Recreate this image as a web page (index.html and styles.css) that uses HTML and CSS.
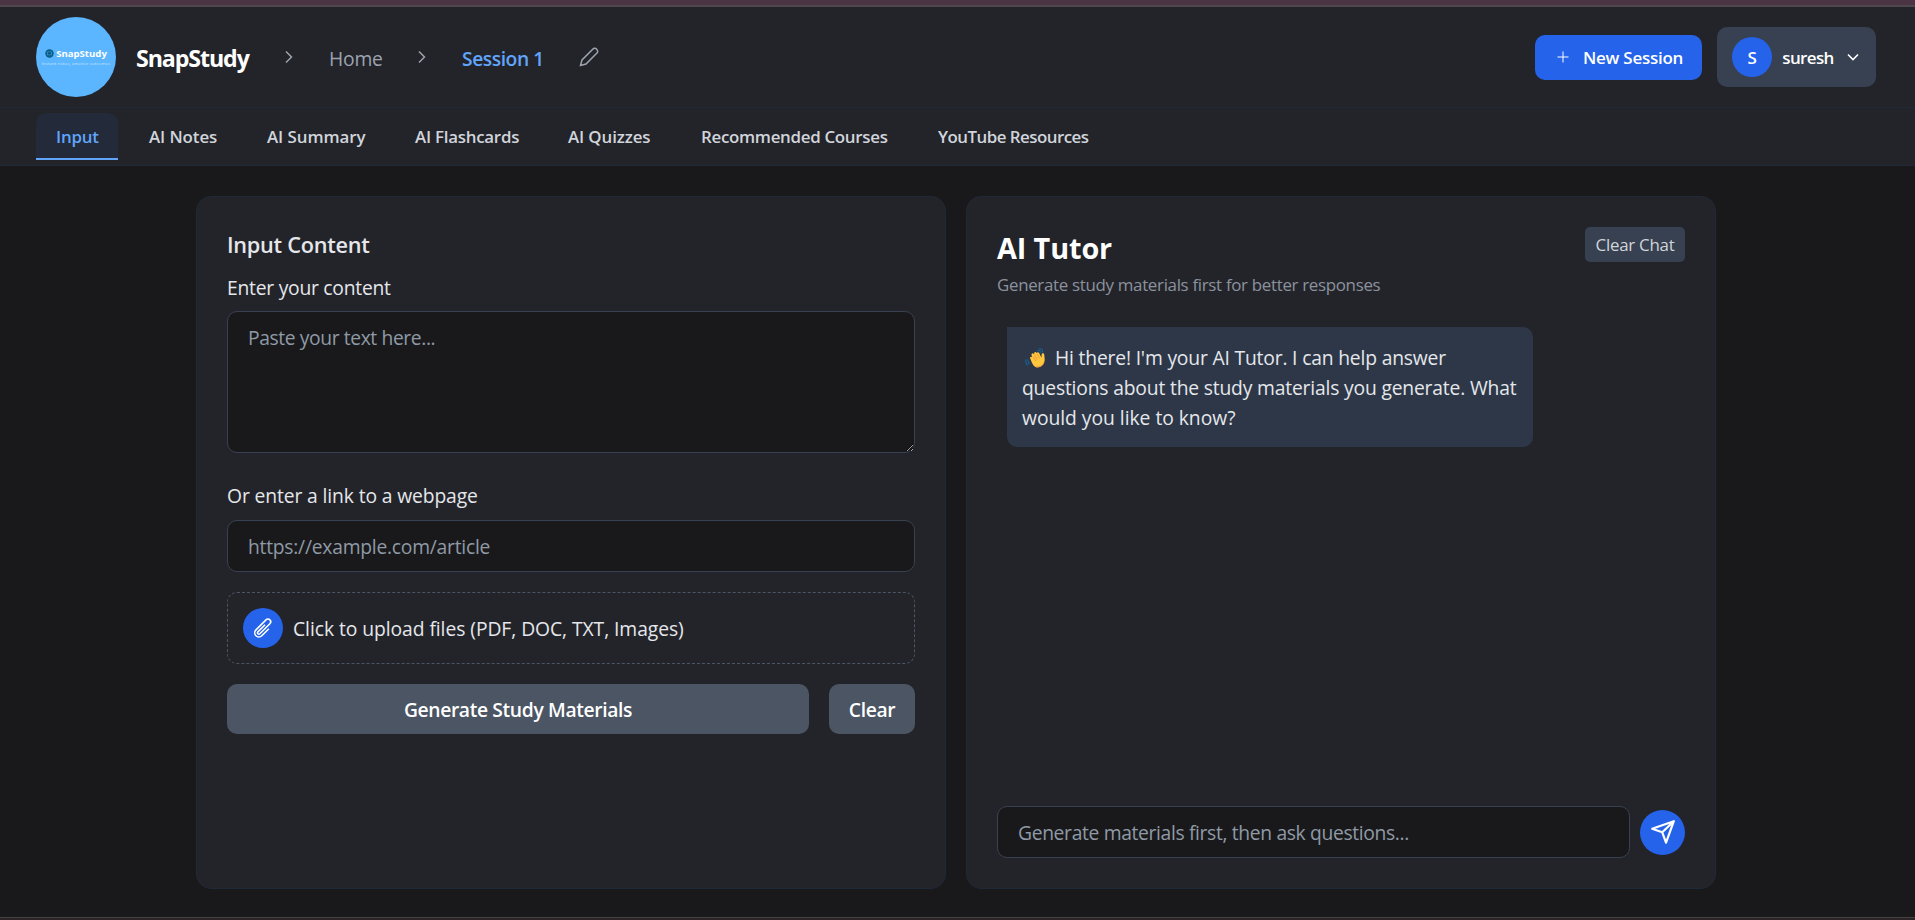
FILE: index.html
```html
<!DOCTYPE html>
<html lang="en">
<head>
<meta charset="utf-8">
<title>SnapStudy</title>
<link rel="stylesheet" href="styles.css">
</head>
<body>
<div class="window-strip"></div>
<header class="topbar">
  <div class="brand-logo">
    <div class="logo-row">
      <svg class="logo-mark" viewBox="0 0 10 10"><circle cx="5" cy="5" r="4.7" fill="#075e8a"/><path d="M2.800 3.200c1-.6 1.700-.5 2.200.2.500-.7 1.200-.8 2.200-.2v3.500c-1-.5-1.700-.4-2.200.2-.500-.6-1.200-.7-2.200-.2z" fill="none" stroke="#4da3cf" stroke-width=".7"/></svg>
      <span class="logo-name">SnapStudy</span>
    </div>
    <span class="logo-tag">Instant notes, smarter outcomes</span>
  </div>
  <span class="brand-name">SnapStudy</span>
  <svg class="crumb-arrow first" viewBox="0 0 20 20"><path d="M7 4.500 12.500 10 7 15.500"/></svg>
  <span class="crumb">Home</span>
  <svg class="crumb-arrow" viewBox="0 0 20 20"><path d="M7 4.500 12.500 10 7 15.500"/></svg>
  <span class="crumb current">Session 1</span>
  <svg class="pencil" viewBox="0 0 20 20"><path d="M1.500 18.500 3 13 13.700 2.300a2.500 2.500 0 0 1 4 0 2.500 2.500 0 0 1 0 4L7 17z"/></svg>
  <button class="new-session"><svg class="plus" viewBox="0 0 12 12"><path d="M6 .5v11M.5 6h11"/></svg><span class="btn-text">New Session</span></button>
  <button class="user"><span class="avatar">S</span><span class="btn-text user-name">suresh</span><svg class="caret" viewBox="0 0 12 8"><path d="M1 1.500 6 6.500 11 1.500"/></svg></button>
</header>
<nav class="tabs">
  <a class="tab active">Input</a>
  <a class="tab t-notes">AI Notes</a>
  <a class="tab t-summary">AI Summary</a>
  <a class="tab t-flash">AI Flashcards</a>
  <a class="tab t-quiz">AI Quizzes</a>
  <a class="tab t-rec">Recommended Courses</a>
  <a class="tab t-yt">YouTube Resources</a>
</nav>
<main class="workspace">
  <section class="card input-card">
    <h2 class="input-title">Input Content</h2>
    <label class="label l-content">Enter your content</label>
    <textarea class="field area" placeholder="Paste your text here..."></textarea>
    <label class="label l-link">Or enter a link to a webpage</label>
    <input class="field link" placeholder="https://example.com/article">
    <div class="dropzone">
      <span class="clip"><svg viewBox="0 0 24 24"><path d="m18.375 12.739-7.693 7.693a4.500 4.500 0 0 1-6.364-6.364l10.940-10.940A3 3 0 1 1 19.500 7.372L8.552 18.320m.009-.010-.010.010m5.699-9.941-7.810 7.810a1.500 1.500 0 0 0 2.112 2.130"/></svg></span>
      <span class="drop-text">Click to upload files (PDF, DOC, TXT, Images)</span>
    </div>
    <div class="actions"><button class="btn generate">Generate Study Materials</button><button class="btn clear">Clear</button></div>
  </section>
  <section class="card tutor-card">
    <div class="tutor-head">
      <div><h1 class="tutor-title">AI Tutor</h1><p class="tutor-sub">Generate study materials first for better responses</p></div>
      <button class="clear-chat">Clear Chat</button>
    </div>
    <div class="bubble">
      <div class="line line-1"><svg class="wave" viewBox="0 0 24 24"><path d="M14 3.500c2-1.500 4.500.2 4.200 2.500M15.500 1.200c2.500-1 5 .8 4.700 3.500M3.500 13c-.5 2 .5 4 2 5M1.200 13c-.7 2 0 5 2 7" fill="none" stroke="#17649a" stroke-width="1.200"/><path d="M6 12c-1-1.500 1-3 2-1.500L7.500 8c-.5-2 1.500-3 2.500-1.200l.5-.3c-.2-2 2-2.500 2.800-.8 1-1.500 2.500-1 3 .3l2.500 5 .2-3.500c.2-2 2.800-2 3 .2.300 3 1 6-.1 9-1.500 4-4.700 6.300-8.700 5.500-3.500-.7-5.500-5.500-7.200-10.200z" fill="#ffc83d"/><path d="m10.500 7.500 3.500 6m-.5-7 3 5.500m-7.500-2 3.500 5M13 21c4 1.200 7.500-.8 8.500-4.500" fill="none" stroke="#f08a3c" stroke-width=".9"/></svg><span>Hi there! I'm your AI Tutor. I can help answer</span></div>
      <div class="line line-2">questions about the study materials you generate. What</div>
      <div class="line line-3">would you like to know?</div>
    </div>
    <div class="composer">
      <input class="field ask" placeholder="Generate materials first, then ask questions...">
      <button class="send" aria-label="Send"><svg viewBox="0 0 24 24"><path d="M22 2 14.800 21.800 11.300 12.300 2 9zM22 2 11.300 12.300"/></svg></button>
    </div>
  </section>
</main>
<div class="window-edge"></div>
</body>
</html>
```
FILE: styles.css
```css
* { box-sizing: border-box; }
html { height: 920px; overflow: hidden; background: #19191b; }
body { margin: 0; height: 920px; overflow: hidden; display: flex; flex-direction: column; background: #19191b; color: #e5e7eb; font-family: "Open Sans", "Noto Sans", sans-serif; font-size: 19.300px; letter-spacing: -.25px; }
h1, h2, p { margin: 0; }
button { border: 0; padding: 0; color: #fff; font: inherit; font-weight: 600; letter-spacing: inherit; white-space: nowrap; }
svg { flex: none; fill: none; stroke: currentColor; }
.window-strip { height: 7px; flex: none; background: #4b3545; border-bottom: 2px solid #50474c; }
.topbar { height: 101px; flex: none; display: flex; align-items: center; padding: 0 39px 0 36px; background: #23242a; border-bottom: 1px solid #1f2937; white-space: nowrap; }
.brand-logo { width: 80px; height: 80px; flex: none; border-radius: 50%; background: #5cb6ff; display: flex; flex-direction: column; align-items: center; padding-top: 30px; letter-spacing: 0; }
.logo-row { display: flex; align-items: center; gap: 2px; height: 13px; }
.logo-mark { width: 9px; height: 9px; stroke: none; }
.logo-name { font: 700 9.600px/13px "Open Sans", sans-serif; color: #fff; }
.logo-tag { font: 4.300px/6px "Open Sans", sans-serif; color: #c3e3ff; letter-spacing: .1px; }
.brand-name { width: 114px; margin-left: 20px; padding-top: 1px; font-size: 23.200px; font-weight: 700; color: #fff; letter-spacing: -1.100px; }
.crumb-arrow { width: 20px; height: 20px; margin: 0 30px; color: #9ca3af; stroke-width: 1.500; }
.crumb-arrow.first { margin-left: 29px; }
.crumb { width: 53px; padding-top: 2px; color: #9ca3af; letter-spacing: -.2px; }
.crumb.current { width: 82px; color: #60a5fa; font-weight: 600; letter-spacing: -.45px; }
.pencil { width: 20px; height: 20px; margin-left: 35px; color: #9ca3af; stroke-width: 1.500; }
.new-session { width: 167px; height: 45px; margin-left: auto; padding-left: 22px; display: flex; align-items: center; gap: 14px; border-radius: 10px; background: #2563eb; font-size: 17px; letter-spacing: -.27px; }
.btn-text { padding-top: 1px; }
.plus { width: 12px; height: 12px; }
.user { width: 159px; height: 60px; margin-left: 15px; padding-left: 15px; display: flex; align-items: center; border-radius: 10px; background: #374151; font-size: 17px; }
.avatar { width: 40px; height: 40px; line-height: 42px; border-radius: 50%; background: #2563eb; }
.user-name { width: 52px; margin: 0 13px 0 10px; letter-spacing: -.65px; }
.caret { width: 12px; height: 8px; stroke-width: 1.600; }
.tabs { height: 58px; flex: none; display: flex; align-items: flex-start; gap: 10px; padding: 5px 36px 0; background: #23242a; border-bottom: 1px solid #1f2937; }
.tab { height: 47px; padding: 0 0 0 21px; line-height: 47px; color: #d1d5db; font-size: 16.900px; font-weight: 600; letter-spacing: -.25px; white-space: nowrap; }
.tab.active { width: 82px; padding-left: 20px; color: #60a5fa; background: #232a3a; border-bottom: 2px solid #60a5fa; border-radius: 10px 10px 0 0; }
.t-notes { width: 108px; letter-spacing: -.08px; }
.t-summary { width: 138px; letter-spacing: -.06px; }
.t-flash { width: 143px; }
.t-quiz { width: 123px; letter-spacing: -.12px; }
.t-rec { width: 227px; letter-spacing: -.3px; }
.t-yt { width: 192px; letter-spacing: -.52px; }
.workspace { display: flex; gap: 20px; padding: 30px 0 0 196px; height: 723px; flex: none; }
.card { width: 750px; height: 693px; padding: 30px; background: #23242a; border: 1px solid #1f2937; border-radius: 15px; display: flex; flex-direction: column; }
.input-title { height: 35px; line-height: 35px; font-size: 21.700px; font-weight: 600; letter-spacing: -.27px; }
.label { height: 30px; line-height: 29px; white-space: nowrap; }
.l-content { margin: 11px 0 8px; }
.l-link { margin: 28px 0 9px; letter-spacing: -.12px; }
.field { background: #19191b; border: 1px solid #374151; border-radius: 10px; padding: 0 20px; color: #e5e7eb; font: inherit; letter-spacing: -.25px; width: 100%; flex: none; }
.field::placeholder { color: #8f9aa6; opacity: 1; }
.area { height: 142px; padding-top: 12px; resize: vertical; display: block; letter-spacing: -.4px; }
.link { height: 52px; }
.dropzone { height: 72px; flex: none; margin: 20px 0; padding-left: 15px; border: 1px dashed #4b5563; border-radius: 10px; display: flex; align-items: center; gap: 10px; white-space: nowrap; letter-spacing: -.06px; }
.clip { width: 40px; height: 40px; padding: 0 1px 1px 0; border-radius: 50%; background: #2563eb; color: #fff; display: grid; place-items: center; }
.clip svg { width: 22px; height: 22px; stroke-width: 1.700; }
.actions { display: flex; gap: 20px; }
.btn { height: 50px; border-radius: 10px; background: #4b5563; letter-spacing: -.36px; }
.generate { flex: 1; }
.clear { width: 86px; }
.tutor-head { display: flex; justify-content: space-between; height: 100px; flex: none; }
.tutor-title { font-size: 28.800px; line-height: 42px; font-weight: 700; color: #fff; white-space: nowrap; letter-spacing: -.1px; }
.tutor-sub { font-size: 16.900px; line-height: 31px; color: #8b929e; white-space: nowrap; letter-spacing: -.31px; }
.clear-chat { width: 100px; height: 35px; border-radius: 5px; background: #374151; color: #d1d5db; font-size: 16.900px; font-weight: 400; }
.bubble { width: 526px; height: 120px; margin-left: 10px; padding: 15px; flex: none; background: #2d3748; border-radius: 0 10px 10px 10px; }
.line { height: 30px; line-height: 31px; white-space: nowrap; letter-spacing: -.18px; }
.line-1 { display: flex; }
.line-3 { letter-spacing: -.03px; }
.wave { width: 21px; height: 21px; margin: 6px 9px 0 3px; stroke: none; }
.composer { margin-top: auto; display: flex; align-items: center; gap: 10px; }
.ask { width: 633px; height: 52px; letter-spacing: -.35px; }
.send { width: 45px; height: 45px; flex: none; border-radius: 50%; background: #2563eb; display: grid; place-items: center; }
.send svg { width: 26px; height: 26px; stroke-width: 2; stroke-linejoin: round; stroke-linecap: round; }
.window-edge { margin-top: auto; height: 3px; flex: none; background: #2a2426; border-top: 1px solid #444142; }
```
